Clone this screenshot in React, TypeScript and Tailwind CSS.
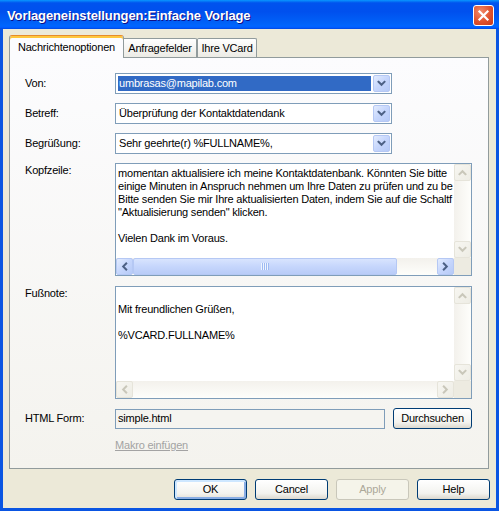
import React from 'react';

type Dir = 'up' | 'down' | 'left' | 'right';

const rotClass: Record<Dir, string> = {
  down: '',
  up: 'rotate-180',
  left: 'rotate-90',
  right: '-rotate-90',
};

function Chevron({ dir, color }: { dir: Dir; color: string }) {
  return (
    <svg width="9" height="9" viewBox="0 0 9 9" className={rotClass[dir]}>
      <path d="M1.5 2.8 L4.5 5.8 L7.5 2.8" fill="none" stroke={color} strokeWidth="2" strokeLinecap="square" />
    </svg>
  );
}

function ScrollBtn({ dir, disabled }: { dir: Dir; disabled?: boolean }) {
  return disabled ? (
    <div className="w-[17px] h-[17px] shrink-0 flex items-center justify-center rounded-[2px] border border-[#E6E4DA] bg-[linear-gradient(135deg,#F7F6F1,#EEEDE5)]">
      <Chevron dir={dir} color="#C9C7BA" />
    </div>
  ) : (
    <div className="w-[17px] h-[17px] shrink-0 flex items-center justify-center rounded-[2px] border border-[#B5C8F4] bg-[linear-gradient(135deg,#E3ECFE,#C6D6FC_50%,#B6CAF7)]">
      <Chevron dir={dir} color="#4D6185" />
    </div>
  );
}

function Combo({ text, selected }: { text: string; selected?: boolean }) {
  return (
    <div className="w-[277px] h-[21px] border border-[#7F9DB9] bg-white flex items-stretch p-[1px]">
      <div className="flex-1 flex items-stretch p-[1px] pr-[2px] min-w-0">
        <div
          className={
            selected
              ? 'flex-1 bg-[#316AC5] text-white flex items-center pl-[1px] whitespace-nowrap overflow-hidden'
              : 'flex-1 text-black flex items-center pl-[1px] whitespace-nowrap overflow-hidden'
          }
        >
          {text}
        </div>
      </div>
      <div className="w-[17px] shrink-0 flex items-center justify-center rounded-[2px] border border-[#B5C8F4] bg-[linear-gradient(135deg,#E3ECFE,#C6D6FC_50%,#B6CAF7)]">
        <Chevron dir="down" color="#4D6185" />
      </div>
    </div>
  );
}

function TextBox({ lines, active }: { lines: string[]; active?: boolean }) {
  return (
    <div className="w-[357px] h-[113px] border border-[#7F9DB9] bg-white flex flex-col">
      <div className="flex flex-1 min-h-0">
        <div className="flex-1 min-w-0 overflow-hidden pl-[2px] pt-[3px] whitespace-nowrap leading-[13px]">
          {lines.map((l, i) => (
            <div key={i} className="h-[13px]">
              {l}
            </div>
          ))}
        </div>
        <div className="w-[17px] shrink-0 flex flex-col bg-[linear-gradient(to_right,#F3F1EC,#FEFEFB)]">
          <ScrollBtn dir="up" disabled />
          <div className="flex-1" />
          <ScrollBtn dir="down" disabled />
        </div>
      </div>
      <div className="h-[17px] shrink-0 flex">
        <div className="flex-1 flex bg-[linear-gradient(to_bottom,#F3F1EC,#FEFEFB)]">
          <ScrollBtn dir="left" disabled={!active} />
          {active && (
            <div className="w-[264px] h-[17px] rounded-[2px] border border-[#B5C8F4] bg-[linear-gradient(to_bottom,#D8E4FE,#C6D6FC_50%,#B9CCF8)] flex items-center justify-center">
              <div className="flex gap-[0px]">
                <div className="w-[2px] h-[7px] bg-[#EEF4FE] border-r border-[#9EBAF3]" />
                <div className="w-[2px] h-[7px] bg-[#EEF4FE] border-r border-[#9EBAF3]" />
                <div className="w-[2px] h-[7px] bg-[#EEF4FE] border-r border-[#9EBAF3]" />
                <div className="w-[2px] h-[7px] bg-[#EEF4FE] border-r border-[#9EBAF3]" />
              </div>
            </div>
          )}
          <div className="flex-1" />
          <ScrollBtn dir="right" disabled={!active} />
        </div>
        <div className="w-[17px] shrink-0 bg-[#EDEBE1]" />
      </div>
    </div>
  );
}

function XPButton({
  children,
  disabled,
  isDefault,
  w,
}: {
  children: React.ReactNode;
  disabled?: boolean;
  isDefault?: boolean;
  w: string;
}) {
  if (disabled) {
    return (
      <div className={`${w} h-[21px] rounded-[3px] border border-[#C9C7BA] bg-[#F5F4EA] text-[#ACA899] flex items-center justify-center`}>
        {children}
      </div>
    );
  }
  return (
    <div
      className={
        isDefault
          ? `${w} h-[21px] rounded-[3px] border border-[#003C74] bg-[linear-gradient(to_bottom,#FFFFFF,#F3F3EF_70%,#E2DFD6)] shadow-[inset_1px_1px_0_1px_#CEE7FF,inset_-1px_-1px_0_1px_#89ADE4] text-black flex items-center justify-center`
          : `${w} h-[21px] rounded-[3px] border border-[#003C74] bg-[linear-gradient(to_bottom,#FFFFFF,#F3F3EF_70%,#DCD8CE)] text-black flex items-center justify-center`
      }
    >
      {children}
    </div>
  );
}

export default function App() {
  return (
    <div className="w-[499px] h-[511px] flex flex-col bg-[#0A55E2] font-['Liberation_Sans',Arial,sans-serif] text-[11px] tracking-[-0.2px] text-black overflow-hidden">
      {/* Title bar */}
      <div className="h-[29px] shrink-0 flex items-center pl-[7px] pr-[5px] pt-[2px] bg-[linear-gradient(to_bottom,#0997FF,#0053EE_10%,#0050EE_40%,#0062F8_80%,#0066FF_90%,#005BFF_95%,#0048DD)]">
        <div className="flex-1 text-white font-bold text-[13px] tracking-[-0.1px] [text-shadow:1px_1px_#0F1089]">
          Vorlageneinstellungen:Einfache Vorlage
        </div>
        <div className="w-[21px] h-[21px] rounded-[3px] border border-white bg-[radial-gradient(circle_at_35%_30%,#F28B6B,#E0522E_55%,#C8391A)] flex items-center justify-center">
          <svg width="13" height="13" viewBox="0 0 13 13">
            <path d="M2.5 2.5 L10.5 10.5 M10.5 2.5 L2.5 10.5" stroke="white" strokeWidth="2.2" strokeLinecap="square" />
          </svg>
        </div>
      </div>

      {/* Body */}
      <div className="flex-1 mx-[3px] mb-[3px] bg-[#ECE9D8] flex flex-col pt-[6px]">
        {/* Tabs */}
        <div className="flex items-start h-[22px] pl-[6px]">
          <div className="relative z-10 h-[23px] w-[115px] border-x border-t border-x-[#919B9C] border-t-[#E68B2C] rounded-t-[3px] bg-[#FCFCFE] shadow-[inset_0_2px_0_#FFC73C] flex items-center justify-center pt-[1px]">
            Nachrichtenoptionen
          </div>
          <div className="mt-[3px] h-[19px] w-[73px] border-t border-r border-[#919B9C] rounded-tr-[2px] bg-[linear-gradient(to_bottom,#FFFFFF,#ECEBE5)] flex items-center justify-center pt-[1px]">
            Anfragefelder
          </div>
          <div className="mt-[3px] h-[19px] w-[60px] border-t border-x border-[#919B9C] rounded-t-[2px] bg-[linear-gradient(to_bottom,#FFFFFF,#ECEBE5)] flex items-center justify-center pt-[1px]">
            Ihre VCard
          </div>
        </div>

        {/* Panel */}
        <div className="ml-[6px] w-[480px] h-[412px] shrink-0 border border-[#919B9C] bg-[linear-gradient(to_bottom,#FCFCFE,#F4F3EE)] flex flex-col pl-[15px] pt-[15px]">
          <div className="flex items-center h-[21px]">
            <span className="w-[90px] shrink-0">Von:</span>
            <Combo text="umbrasas@mapilab.com" selected />
          </div>
          <div className="flex items-center h-[21px] mt-[9px]">
            <span className="w-[90px] shrink-0">Betreff:</span>
            <Combo text="Überprüfung der Kontaktdatendank" />
          </div>
          <div className="flex items-center h-[21px] mt-[9px]">
            <span className="w-[90px] shrink-0">Begrüßung:</span>
            <Combo text="Sehr geehrte(r) %FULLNAME%," />
          </div>
          <div className="flex items-start mt-[9px]">
            <span className="w-[90px] shrink-0 leading-[13px] pt-[1px]">Kopfzeile:</span>
            <TextBox
              active
              lines={[
                'momentan aktualisiere ich meine Kontaktdatenbank. Könnten Sie bitte',
                'einige Minuten in Anspruch nehmen um Ihre Daten zu prüfen und zu be',
                'Bitte senden Sie mir Ihre aktualisierten Daten, indem Sie auf die Schaltf',
                '"Aktualisierung senden" klicken.',
                '',
                'Vielen Dank im Voraus.',
              ]}
            />
          </div>
          <div className="flex items-start mt-[10px]">
            <span className="w-[90px] shrink-0 leading-[13px] pt-[1px]">Fußnote:</span>
            <TextBox lines={['', 'Mit freundlichen Grüßen,', '', '%VCARD.FULLNAME%']} />
          </div>
          <div className="flex items-center h-[21px] mt-[9px]">
            <span className="w-[90px] shrink-0">HTML Form:</span>
            <div className="w-[270px] h-[20px] border border-[#7F9DB9] bg-[#F5F4F0] flex items-center pl-[2px]">
              simple.html
            </div>
            <div className="ml-[8px]">
              <XPButton w="w-[79px]">Durchsuchen</XPButton>
            </div>
          </div>
          <div className="mt-[10px] ml-[90px] leading-[13px] text-[#A3A3A3] underline">Makro einfügen</div>
        </div>

        {/* Buttons */}
        <div className="mt-[10px] flex justify-end gap-[8px] pr-[6px]">
          <XPButton w="w-[73px]" isDefault>
            OK
          </XPButton>
          <XPButton w="w-[73px]">Cancel</XPButton>
          <XPButton w="w-[73px]" disabled>
            Apply
          </XPButton>
          <XPButton w="w-[73px]">Help</XPButton>
        </div>
      </div>
    </div>
  );
}
